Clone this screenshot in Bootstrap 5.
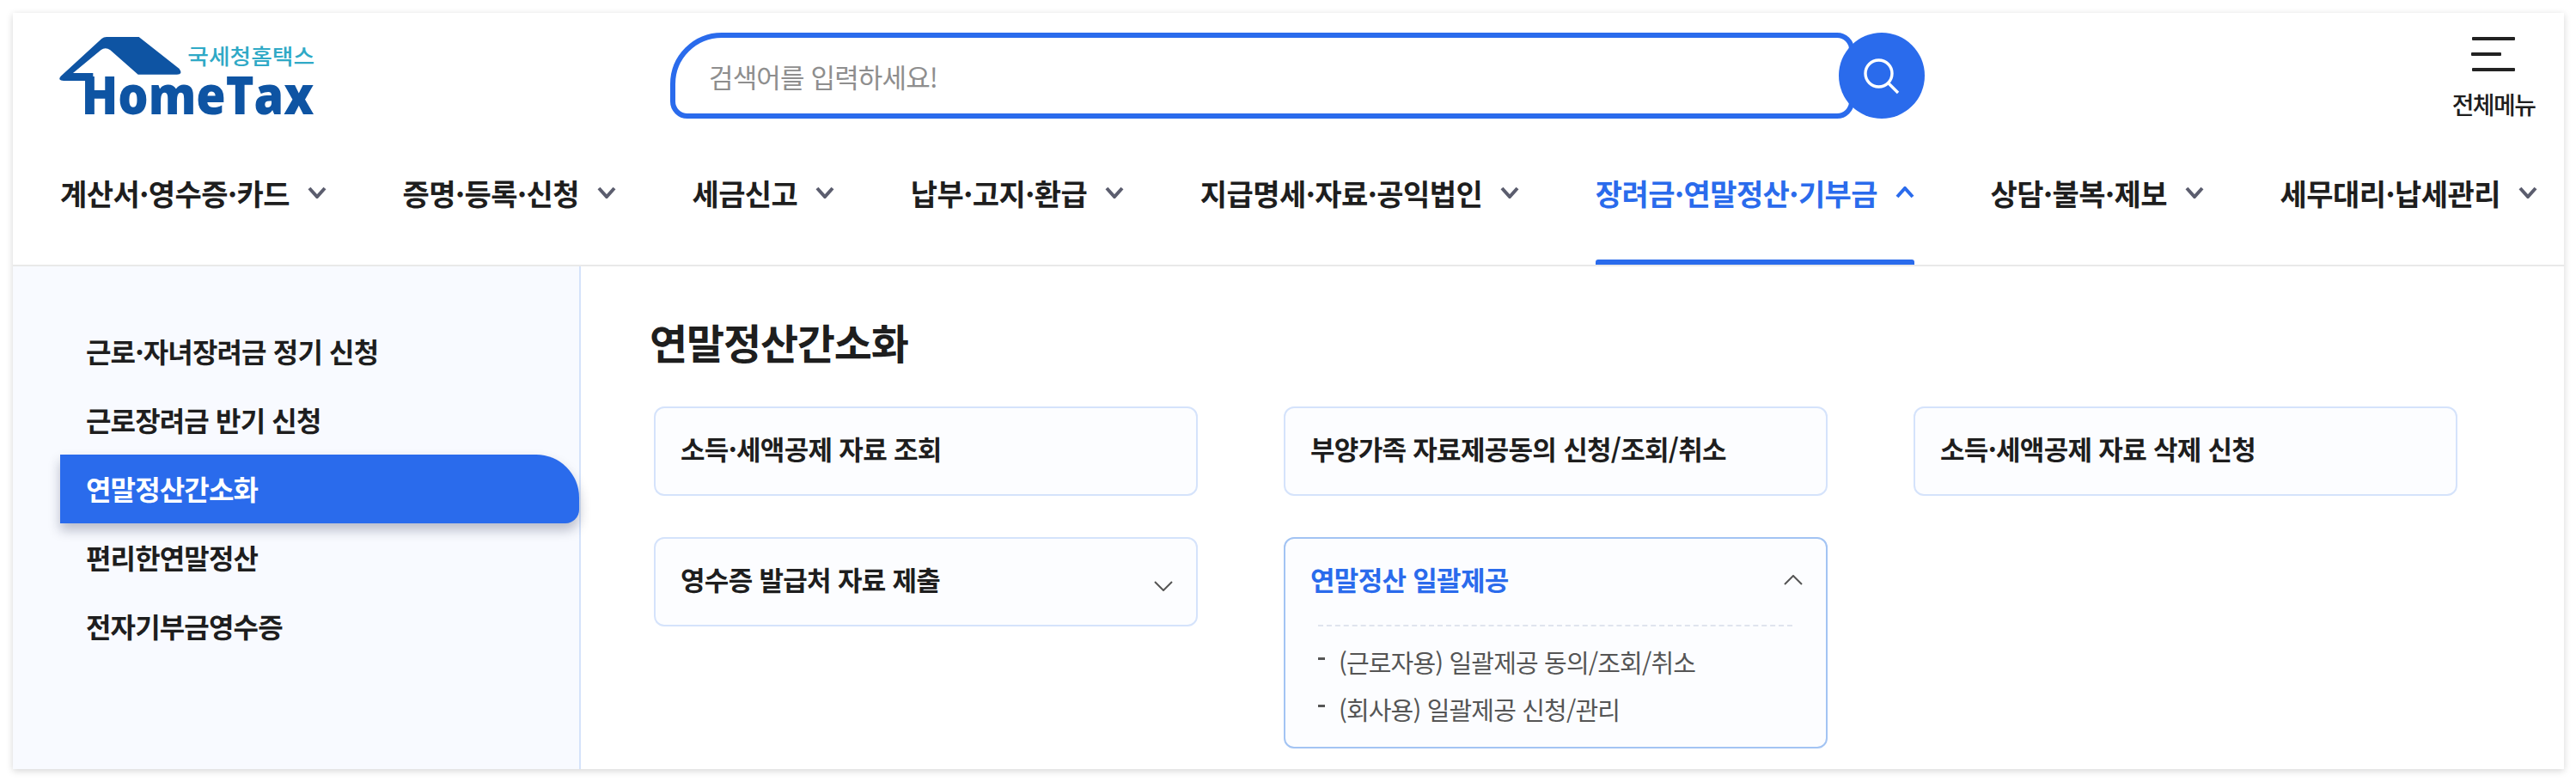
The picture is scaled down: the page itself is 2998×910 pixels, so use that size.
<!DOCTYPE html>
<html lang="ko">
<head>
    <meta charset="UTF-8">
    <meta name="viewport" content="width=device-width, initial-scale=1.0">
    <title>HomeTax</title>
    <link href="https://cdn.jsdelivr.net/npm/bootstrap@5.3.0/dist/css/bootstrap.min.css" rel="stylesheet">
    <style>
        body { background: #fff; font-family: "Noto Sans CJK KR", "Noto Sans", sans-serif; color: #1e1e1e; overflow: hidden; }
        .page-card { margin: 15px 14px 15px 15px; height: 880px; border: 0; border-radius: 0; box-shadow: 0 2px 8px rgba(0,0,0,.17); }
        .top-bar { height: 135px; }
        .logo-box { width: 340px; height: 120px; margin: 15px 0 0 35px; flex: none; }
        .logo-box svg { overflow: visible; }
        .logo-home { font-family: "Open Sans", sans-serif; font-weight: 800; font-size: 184px; fill: #0e54a3; }
        .logo-kr { font-family: "Noto Sans CJK KR", sans-serif; font-weight: 500; font-size: 76px; fill: #2fa9c6; }
        .search-box { width: 1460px; height: 100px; margin: 23px 0 0 390px; flex: none; }
        .search-input { height: 100px; border: 6px solid #2a6bec; border-radius: 60px 20px 20px 20px; padding: 0 39px; font-size: 31px; letter-spacing: -.85px; box-shadow: none !important; }
        .search-input:focus { border-color: #2a6bec; }
        .search-input::placeholder { color: #8e8e8e; }
        .search-btn { width: 100px; height: 100px; margin-left: -18px; flex: none; background: #2a6bec; position: relative; }
        .menu-box { width: 100px; margin: 28px 32px 0 auto; }
        .menu-line { height: 4px; width: 50px; background: #222; margin-bottom: 14px; border-radius: 1px; }
        .menu-line.short { width: 35px; }
        .menu-label { font-size: 28px; line-height: 30px; margin-top: 23px; letter-spacing: -1.6px; font-weight: 500; white-space: nowrap; }
        .gnb-row { height: 160px; padding: 0 31px 0 55px; border-bottom: 2px solid #e9e9e9; }
        .gnb-item { position: relative; padding-bottom: 10px; gap: 21px; font-size: 34px; font-weight: 700; letter-spacing: -.55px; color: #1e1e1e; text-decoration: none; white-space: nowrap; }
        .gnb-item.on { color: #2a6bec; }
        .gnb-item.on::after { content: ""; position: absolute; left: 0; right: 0; bottom: 0; height: 6px; background: #2a6bec; border-radius: 3px 3px 0 0; }
        .side-col { width: 661px; padding: 59px 0 0 55px; background: #f8faff; border-right: 2px solid #d5e3fb; flex: none; }
        .side-item { height: 80px; padding: 0 0 3px 30px; font-size: 32px; font-weight: 700; letter-spacing: -.85px; color: #1e1e1e; text-decoration: none; }
        .side-item.on { background: #2a6bec; color: #fff; border-radius: 0 50px 16px 0; box-shadow: 0 8px 14px rgba(20,30,60,.28); }
        .main-col { padding: 52px 0 0 80px; }
        .main-title { font-size: 48px; line-height: 70px; font-weight: 700; letter-spacing: -1.2px; margin: 0 0 41px; }
        .menu-grid { display: grid; grid-template-columns: repeat(3, 633px); column-gap: 100px; row-gap: 48px; align-items: start; margin-left: 5px; }
        .tile { background: #fcfdff; border: 2px solid #d5e3fb; border-radius: 12px; padding: 0 27px 0 29px; }
        .tile.open { border-color: #a3c4f3; padding-bottom: 16px; }
        .tile-head { height: 100px; font-size: 31px; font-weight: 700; letter-spacing: -.7px; color: #1e1e1e; }
        .tile-text { margin-top: -5px; }
        .tile-arrow { margin-top: 10px; }
        .tile.open .tile-arrow { margin-top: -5px; }
        .tile.open .tile-head { color: #2a6bec; }
        .sub-list { border-top: 2px dashed #dfe4ee; margin: 0 12px 0 9px; padding: 14px 0 0; list-style: none; }
        .sub-list li { position: relative; height: 55px; line-height: 55px; padding-left: 24px; font-size: 29px; letter-spacing: -.85px; color: #555; white-space: nowrap; }
        .sub-list li::before { content: ""; position: absolute; left: 0; top: 22px; width: 8px; height: 3px; background: #555; }
    </style>
</head>
<body>
    <div class="card page-card">
        <div class="top-bar d-flex align-items-start">
            <div class="logo-box">
                <svg width="340" height="120" viewBox="0 0 1020 360">
                    <path d="M62 176 L205 45 Q212 39 222 39 L335 39 L476 150 Q490 170 468 170 L332 170 L235 85 Q218 72 202 85 L105 165 L175 165 L175 192 L72 192 Q50 190 62 176Z" fill="#0e54a3"/>
                    <text class="logo-home" x="134" y="308" textLength="812" lengthAdjust="spacingAndGlyphs">HomeTax</text>
                    <text class="logo-kr" x="505" y="134" textLength="443" lengthAdjust="spacingAndGlyphs">국세청홈택스</text>
                </svg>
            </div>
            <div class="search-box d-flex">
                <input class="form-control search-input" type="text" placeholder="검색어를 입력하세요!">
                <button class="btn search-btn rounded-circle p-0 d-flex align-items-center justify-content-center" type="button" aria-label="검색">
                    <svg width="50" height="50" viewBox="0 0 50 50" fill="none" stroke="#fff" stroke-width="3.4">
                        <circle cx="21.5" cy="22.5" r="15.5"/>
                        <path d="M32.5 33.5 L44 45"/>
                    </svg>
                </button>
            </div>
            <div class="menu-box d-flex flex-column align-items-center">
                <div class="menu-line"></div>
                <div class="menu-line short align-self-start ms-4"></div>
                <div class="menu-line mb-0"></div>
                <div class="menu-label">전체메뉴</div>
            </div>
        </div>

        <nav class="gnb-row d-flex justify-content-between" id="gnb"></nav>

        <div class="d-flex flex-grow-1">
            <div class="side-col">
                <a class="side-item d-flex align-items-center" href="#">근로·자녀장려금 정기 신청</a>
                <a class="side-item d-flex align-items-center" href="#">근로장려금 반기 신청</a>
                <a class="side-item on d-flex align-items-center" href="#">연말정산간소화</a>
                <a class="side-item d-flex align-items-center" href="#">편리한연말정산</a>
                <a class="side-item d-flex align-items-center" href="#">전자기부금영수증</a>
            </div>
            <div class="main-col flex-grow-1">
                <h2 class="main-title">연말정산간소화</h2>
                <div class="menu-grid">
                    <div class="tile"><div class="tile-head d-flex align-items-center"><span class="tile-text">소득·세액공제 자료 조회</span></div></div>
                    <div class="tile"><div class="tile-head d-flex align-items-center"><span class="tile-text">부양가족 자료제공동의 신청/조회/취소</span></div></div>
                    <div class="tile"><div class="tile-head d-flex align-items-center"><span class="tile-text">소득·세액공제 자료 삭제 신청</span></div></div>
                    <div class="tile">
                        <div class="tile-head d-flex align-items-center justify-content-between">
                            <span class="tile-text">영수증 발급처 자료 제출</span>
                            <svg class="tile-arrow" width="22" height="12" viewBox="0 0 22 12" fill="none" stroke="#555" stroke-width="2"><path d="M1 1 L11 11 L21 1"/></svg>
                        </div>
                    </div>
                    <div class="tile open">
                        <div class="tile-head d-flex align-items-center justify-content-between">
                            <span class="tile-text">연말정산 일괄제공</span>
                            <svg class="tile-arrow" width="22" height="12" viewBox="0 0 22 12" fill="none" stroke="#555" stroke-width="2"><path d="M1 11 L11 1 L21 11"/></svg>
                        </div>
                        <ul class="sub-list">
                            <li>(근로자용) 일괄제공 동의/조회/취소</li>
                            <li>(회사용) 일괄제공 신청/관리</li>
                        </ul>
                    </div>
                </div>
            </div>
        </div>
    </div>

    <script src="https://cdn.jsdelivr.net/npm/bootstrap@5.3.0/dist/js/bootstrap.bundle.min.js"></script>
    <script>
        var gnbItems = ['계산서·영수증·카드', '증명·등록·신청', '세금신고', '납부·고지·환급', '지급명세·자료·공익법인', '장려금·연말정산·기부금', '상담·불복·제보', '세무대리·납세관리'];
        var gnb = document.getElementById('gnb');
        gnbItems.forEach(function(label, i) {
            var on = i === 5;
            var path = on ? 'M2 12 L11 2 L20 12' : 'M2 2 L11 12 L20 2';
            var color = on ? '#2a6bec' : '#5b5d6e';
            gnb.innerHTML += '<a class="gnb-item d-flex align-items-center' + (on ? ' on' : '') + '" href="#">' + label +
                '<svg width="22" height="14" viewBox="0 0 22 14" fill="none" stroke="' + color + '" stroke-width="4"><path d="' + path + '"/></svg></a>';
        });
    </script>
</body>
</html>
